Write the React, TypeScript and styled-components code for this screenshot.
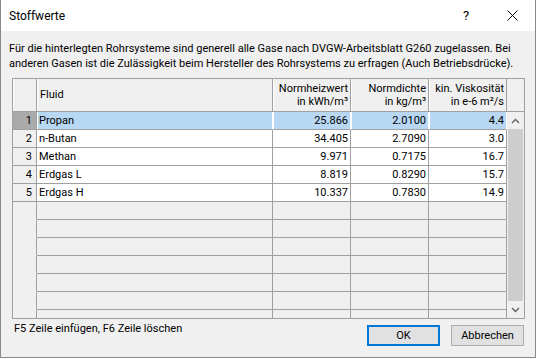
import React from "react";
import styled, { createGlobalStyle } from "styled-components";

const GlobalStyle = createGlobalStyle`
  html, body { margin: 0; padding: 0; background: #ffffff; }
  body { font-family: "Segoe UI", Roboto, "Liberation Sans", sans-serif; font-size: 11px; color: #000; }
  * { box-sizing: border-box; }
`;

const Window = styled.div`
  width: 536px;
  height: 358px;
  border: 1px solid #8a8a8a;
  border-top: none;
  display: flex;
  flex-direction: column;
  background: #f0f0f0;
`;

const TitleBar = styled.div`
  height: 31px;
  background: #ffffff;
  display: flex;
  align-items: center;
  padding-left: 8px;
  flex-shrink: 0;
`;

const Title = styled.div`
  flex: 1;
  font-size: 12px;
  padding-top: 1px;
`;

const TitleButton = styled.div`
  width: 46px;
  height: 31px;
  display: flex;
  align-items: center;
  justify-content: center;
  font-size: 13px;
`;

const Body = styled.div`
  flex: 1;
  display: flex;
  flex-direction: column;
  padding: 10px 10px 0 8px;
`;

const Description = styled.p`
  margin: 0;
  line-height: 15px;
  font-size: 11px;
  white-space: nowrap;
`;

const GridBox = styled.div`
  margin-top: 7px;
  margin-left: 3px;
  width: 513px;
  height: 241px;
  border: 1px solid #a0a0a0;
  display: flex;
  flex-direction: column;
  overflow: hidden;
`;

const HeaderRow = styled.div`
  display: flex;
  height: 33px;
  flex-shrink: 0;
  border-bottom: 1px solid #a0a0a0;
`;

const HeaderCell = styled.div<{ $w: number; $right?: boolean }>`
  width: ${(p) => p.$w}px;
  flex-shrink: 0;
  border-right: 1px solid #a0a0a0;
  box-shadow: inset 1px 0 0 #ffffff;
  background: #f0f0f0;
  display: flex;
  flex-direction: column;
  justify-content: center;
  align-items: ${(p) => (p.$right ? "flex-end" : "flex-start")};
  text-align: ${(p) => (p.$right ? "right" : "left")};
  padding: 0 2px 1px 3px;
  line-height: 13px;
  white-space: nowrap;
`;

const ScrollHead = styled.div`
  width: 18px;
  flex-shrink: 0;
  background: #f0f0f0;
`;

const BodyArea = styled.div`
  flex: 1;
  display: flex;
  min-height: 0;
`;

const Rows = styled.div`
  display: flex;
  flex-direction: column;
  overflow: hidden;
`;

const Row = styled.div`
  display: flex;
  height: 18px;
  flex-shrink: 0;
`;

const RowHead = styled.div<{ $sel?: boolean; $empty?: boolean }>`
  width: 24px;
  flex-shrink: 0;
  background: ${(p) => (p.$sel ? "#aaaaaa" : "#f0f0f0")};
  border-right: 1px solid #a0a0a0;
  border-bottom: 1px solid ${(p) => (p.$empty ? "transparent" : "#a0a0a0")};
  text-align: right;
  padding-right: 4px;
  line-height: 17px;
`;

const Cell = styled.div<{ $w: number; $sel?: boolean; $right?: boolean; $empty?: boolean }>`
  width: ${(p) => p.$w}px;
  flex-shrink: 0;
  background: ${(p) => (p.$empty ? "#f0f0f0" : p.$sel ? "#b7d7f3" : "#ffffff")};
  border-right: 1px solid ${(p) => (p.$sel ? "#ffffff" : "#a0a0a0")};
  border-bottom: 1px solid #a0a0a0;
  box-shadow: ${(p) => (p.$sel ? "inset 1px 0 0 #ffffff" : "none")};
  text-align: ${(p) => (p.$right ? "right" : "left")};
  padding: 0 2px 0 2px;
  line-height: 17px;
  white-space: nowrap;
`;

const ScrollBar = styled.div`
  width: 17px;
  flex-shrink: 0;
  background: #f0f0f0;
  display: flex;
  flex-direction: column;
`;

const ScrollArrow = styled.div`
  height: 17px;
  flex-shrink: 0;
  display: flex;
  align-items: center;
  justify-content: center;
`;

const Thumb = styled.div`
  flex: 1;
  margin: 0 1px;
  background: #cdcdcd;
`;

const Footer = styled.div`
  display: flex;
  align-items: flex-start;
  padding-left: 5px;
  padding-right: 1px;
`;

const Hint = styled.div`
  flex: 1;
  line-height: 15px;
  margin-top: 2px;
`;

const Button = styled.button<{ $default?: boolean }>`
  margin-top: 6px;
  width: 73px;
  height: 21px;
  background: #e1e1e1;
  border: ${(p) => (p.$default ? "2px solid #0078d7" : "1px solid #adadad")};
  font-family: inherit;
  font-size: 11px;
  color: #000;
  padding: 0;
  margin-left: 11px;
`;

const Chevron = ({ up }: { up?: boolean }) => (
  <svg width="9" height="6" viewBox="0 0 9 6">
    <polyline
      points={up ? "1,5 4.5,1.5 8,5" : "1,1 4.5,4.5 8,1"}
      fill="none"
      stroke="#606060"
      strokeWidth="1.3"
    />
  </svg>
);

const data = [
  ["Propan", "25.866", "2.0100", "4.4"],
  ["n-Butan", "34.405", "2.7090", "3.0"],
  ["Methan", "9.971", "0.7175", "16.7"],
  ["Erdgas L", "8.819", "0.8290", "15.7"],
  ["Erdgas H", "10.337", "0.7830", "14.9"],
];

export default function App() {
  return (
    <>
      <GlobalStyle />
      <Window>
        <TitleBar>
          <Title>Stoffwerte</Title>
          <TitleButton>?</TitleButton>
          <TitleButton>
            <svg width="11" height="11" viewBox="0 0 11 11">
              <line x1="0.5" y1="0.5" x2="10.5" y2="10.5" stroke="#000" strokeWidth="1" />
              <line x1="10.5" y1="0.5" x2="0.5" y2="10.5" stroke="#000" strokeWidth="1" />
            </svg>
          </TitleButton>
        </TitleBar>
        <Body>
          <Description>
            Für die hinterlegten Rohrsysteme sind generell alle Gase nach DVGW-Arbeitsblatt G260 zugelassen. Bei
            <br />
            anderen Gasen ist die Zulässigkeit beim Hersteller des Rohrsystems zu erfragen (Auch Betriebsdrücke).
          </Description>
          <GridBox>
            <HeaderRow>
              <HeaderCell $w={24} />
              <HeaderCell $w={236}>Fluid</HeaderCell>
              <HeaderCell $w={78} $right>
                <span>Normheizwert</span>
                <span>in kWh/m³</span>
              </HeaderCell>
              <HeaderCell $w={78} $right>
                <span>Normdichte</span>
                <span>in kg/m³</span>
              </HeaderCell>
              <HeaderCell $w={78} $right>
                <span>kin. Viskosität</span>
                <span>in e-6 m²/s</span>
              </HeaderCell>
              <ScrollHead />
            </HeaderRow>
            <BodyArea>
              <Rows>
                {data.map((r, i) => (
                  <Row key={i}>
                    <RowHead $sel={i === 0}>{i + 1}</RowHead>
                    <Cell $w={236} $sel={i === 0}>{r[0]}</Cell>
                    <Cell $w={78} $sel={i === 0} $right>{r[1]}</Cell>
                    <Cell $w={78} $sel={i === 0} $right>{r[2]}</Cell>
                    <Cell $w={78} $sel={i === 0} $right>{r[3]}</Cell>
                  </Row>
                ))}
                {Array.from({ length: 7 }).map((_, i) => (
                  <Row key={"e" + i}>
                    <RowHead $empty />
                    <Cell $w={236} $empty />
                    <Cell $w={78} $empty />
                    <Cell $w={78} $empty />
                    <Cell $w={78} $empty />
                  </Row>
                ))}
              </Rows>
              <ScrollBar>
                <ScrollArrow>
                  <Chevron up />
                </ScrollArrow>
                <Thumb />
                <ScrollArrow>
                  <Chevron />
                </ScrollArrow>
              </ScrollBar>
            </BodyArea>
          </GridBox>
          <Footer>
            <Hint>F5 Zeile einfügen, F6 Zeile löschen</Hint>
            <Button $default>OK</Button>
            <Button>Abbrechen</Button>
          </Footer>
        </Body>
      </Window>
    </>
  );
}
